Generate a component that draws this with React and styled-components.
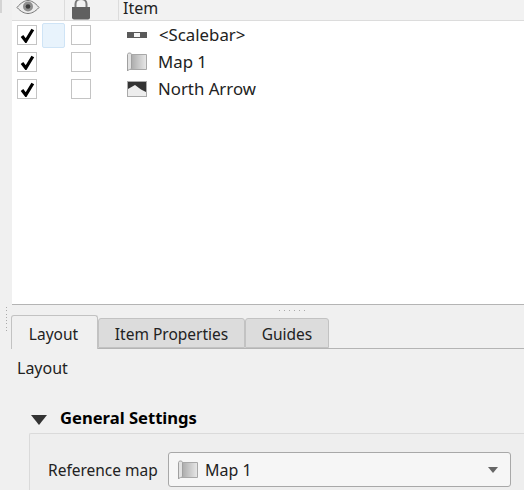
import React from "react";
import styled, { createGlobalStyle } from "styled-components";

const Global = createGlobalStyle`
  html, body {
    margin: 0;
    padding: 0;
    background: #f0f0f0;
    overflow: hidden;
  }
  * {
    box-sizing: border-box;
  }
`;

const Window = styled.div`
  width: 524px;
  height: 490px;
  overflow: hidden;
  position: relative;
  background: #f0f0f0;
  color: #222;
  font-family: "Noto Sans", "Liberation Sans", sans-serif;
  font-size: 15.5px;
  display: flex;
  flex-direction: column;
`;

const CornerMark = styled.div`
  position: absolute;
  left: 0;
  top: 0;
  width: 2px;
  height: 13px;
  background: #d4d4d4;
`;

const Grip = styled.div`
  position: absolute;
  left: 6px;
  top: 307px;
  height: 24px;
  display: flex;
  flex-direction: column;
  justify-content: space-between;
`;

const ItemsPanel = styled.div`
  height: 305px;
  margin-left: 12px;
  background: #fff;
  border-bottom: 1px solid #b4b4b4;
  display: flex;
  flex-direction: column;
  flex-shrink: 0;
`;

const Header = styled.div`
  height: 21px;
  background: #f2f2f2;
  border-bottom: 1px solid #dcdcdc;
  display: flex;
  flex-shrink: 0;
`;

const HeaderCell = styled.div`
  width: ${(p) => p.$w}px;
  flex: ${(p) => (p.$grow ? 1 : "none")};
  border-right: ${(p) => (p.$grow ? "none" : "1px solid #dcdcdc")};
  padding-left: ${(p) => p.$pad || 0}px;
  display: flex;
  align-items: flex-start;
  overflow: hidden;
  font-size: 16px;
  line-height: 16px;
`;

const Rows = styled.div`
  padding-top: 1px;
  display: flex;
  flex-direction: column;
  font-size: 16.8px;
`;

const Row = styled.div`
  height: 27px;
  padding-bottom: 1px;
  display: flex;
  align-items: center;
`;

const RowName = styled.span`
  margin-bottom: 2px;
`;

const Check = styled.div`
  width: 20px;
  height: 20px;
  margin-left: ${(p) => p.$left}px;
  background: #fff;
  border: 1px solid #c4c4c4;
  display: flex;
  align-items: center;
  justify-content: center;
  flex-shrink: 0;
`;

const Hover = styled.div`
  width: 23px;
  height: 25px;
  margin-left: 5px;
  background: #e8f3fc;
  border: 1px solid #cfe4f6;
  border-radius: 2px;
  flex-shrink: 0;
`;

const Spacer = styled.div`
  width: 23px;
  margin-left: 5px;
  flex-shrink: 0;
`;

const RowIcon = styled.div`
  width: 20px;
  height: 20px;
  margin-left: 36px;
  margin-right: ${(p) => p.$gap}px;
  display: flex;
  align-items: center;
  flex-shrink: 0;
`;

const Splitter = styled.div`
  height: 10px;
  display: flex;
  justify-content: flex-end;
  align-items: center;
  padding-right: 219px;
  gap: 4px;
  flex-shrink: 0;
`;

const Dot = styled.span`
  display: block;
  width: 1px;
  height: 1px;
  background: #aaa;
`;

const TabBar = styled.div`
  height: 34px;
  margin-left: 11px;
  display: flex;
  align-items: flex-end;
  border-bottom: 1px solid #b4b4b4;
  flex-shrink: 0;
`;

const Tab = styled.div`
  width: ${(p) => p.$w}px;
  height: ${(p) => (p.$active ? 34 : 30)}px;
  margin-bottom: ${(p) => (p.$active ? -1 : 0)}px;
  background: ${(p) => (p.$active ? "#f0f0f0" : "#dcdcdc")};
  border: 1px solid #c2c2c2;
  border-bottom: ${(p) => (p.$active ? "none" : "1px solid #c2c2c2")};
  border-radius: 3px 3px 0 0;
  display: flex;
  align-items: center;
  justify-content: center;
  padding-right: ${(p) => (p.$active ? 2 : 0)}px;
  padding-top: 2px;
`;

const PageTitle = styled.div`
  margin: 8px 0 0 17px;
  height: 22px;
  line-height: 22px;
  font-size: 16px;
`;

const SectionHead = styled.div`
  margin: 26px 0 0 31px;
  height: 24px;
  display: flex;
  align-items: center;
  gap: 13px;
  font-size: 16.6px;
  font-weight: 700;
  color: #000;
`;

const Triangle = styled.span`
  width: 0;
  height: 0;
  border-left: 8px solid transparent;
  border-right: 8px solid transparent;
  border-top: 10px solid #333;
  margin-top: 6px;
`;

const Group = styled.div`
  margin: 4px 0 0 29px;
  flex: 1;
  border: 1px solid #dadada;
  border-right: none;
  border-bottom: none;
  border-radius: 2px 0 0 0;
  background: #eeeeee;
  padding: 18px 13px 0 18px;
  display: flex;
  align-items: flex-start;
`;

const FieldLabel = styled.label`
  width: 120px;
  height: 34px;
  line-height: 36px;
  flex-shrink: 0;
`;

const Combo = styled.div`
  flex: 1;
  height: 35px;
  background: #f6f6f6;
  border: 1px solid #a8a8a8;
  border-radius: 3px;
  display: flex;
  align-items: center;
  padding: 0 12px 0 9px;
  gap: 7px;
  font-size: 16px;
`;

const Caret = styled.span`
  margin-left: auto;
  width: 0;
  height: 0;
  border-left: 5.5px solid transparent;
  border-right: 5.5px solid transparent;
  border-top: 6px solid #666;
`;

const EyeIcon = () => (
  <svg width="24" height="15" viewBox="0 1 24 15">
    <path d="M1 8.500C5 3.500 9 1.500 12 1.500s7 2 11 7c-4 4.500-8 6-11 6s-7-1.500-11-6z" fill="#ececec" stroke="#777" strokeWidth="1" />
    <circle cx="12" cy="7.500" r="5" fill="#8f8f8f" />
    <circle cx="12" cy="7.500" r="2.300" fill="#3a3a3a" />
  </svg>
);

const LockIcon = () => (
  <svg width="20" height="20" viewBox="0 0 20 20">
    <path d="M4.500 9V4C4.500 1 7 -1 10 -1s5.500 2 5.500 5v5" fill="none" stroke="#7a7a7a" strokeWidth="2" />
    <path d="M1 7h18v10.500a2 2 0 0 1-2 2H3a2 2 0 0 1-2-2z" fill="#606060" />
  </svg>
);

const CheckMark = () => (
  <svg width="15" height="15" viewBox="0 0 15 15">
    <path d="M2 8 5.800 13 12.800 1.500" fill="none" stroke="#000" strokeWidth="3.200" />
  </svg>
);

const ScalebarIcon = () => (
  <svg width="20" height="6" viewBox="0 0 20 6">
    <rect x="0" y="0" width="20" height="6" fill="#5a5a5a" />
    <rect x="7" y="1" width="6" height="4" fill="#f4f4f4" />
  </svg>
);

const MapIcon = ({ id }) => (
  <svg width="20" height="20" viewBox="0 0 20 20">
    <defs>
      <linearGradient id={id} x1="0" x2="1" y1="0" y2="0">
        <stop offset="0" stopColor="#a8a8a8" />
        <stop offset="1" stopColor="#e8e8e8" />
      </linearGradient>
    </defs>
    <path d="M3.500 2.500h16v15h-16z" fill={`url(#${id})`} stroke="#a8a8a8" />
    <path d="M0.500 2.500C0.500 0.500 4.500 0.500 4.500 2.500V16.500c0 1-4 1-4 2.500z" fill="#e2e2e2" stroke="#a0a0a0" />
  </svg>
);

const NorthIcon = () => (
  <svg width="20" height="16" viewBox="0 0 20 16">
    <rect x="0.500" y="0.500" width="19" height="15" fill="#ededed" stroke="#aaa" />
    <path d="M1 1h18v10l-5-2.500L8 4 1 8z" fill="#333" />
  </svg>
);

const App = () => {
  const layers = [
    { name: "<Scalebar>", icon: <ScalebarIcon />, gap: 12, hover: true },
    { name: "Map 1", icon: <MapIcon id="mapRow" />, gap: 11 },
    { name: "North Arrow", icon: <NorthIcon />, gap: 11 },
  ];
  return (
    <Window>
      <Global />
      <CornerMark />
      <Grip>
        {[0, 1, 2, 3, 4, 5, 6, 7].map((i) => (
          <Dot key={i} />
        ))}
      </Grip>
      <ItemsPanel>
        <Header>
          <HeaderCell $w={53} $pad={4}>
            <EyeIcon />
          </HeaderCell>
          <HeaderCell $w={54} $pad={6}>
            <LockIcon />
          </HeaderCell>
          <HeaderCell $grow $pad={4}>
            Item
          </HeaderCell>
        </Header>
        <Rows>
          {layers.map((l) => (
            <Row key={l.name}>
              <Check $left={5}>
                <CheckMark />
              </Check>
              {l.hover ? <Hover /> : <Spacer />}
              <Check $left={6} />
              <RowIcon $gap={l.gap}>{l.icon}</RowIcon>
              <RowName>{l.name}</RowName>
            </Row>
          ))}
        </Rows>
      </ItemsPanel>
      <Splitter>
        {[0, 1, 2, 3, 4, 5].map((i) => (
          <Dot key={i} />
        ))}
      </Splitter>
      <TabBar>
        <Tab $w={87} $active>
          Layout
        </Tab>
        <Tab $w={147}>Item Properties</Tab>
        <Tab $w={84}>Guides</Tab>
      </TabBar>
      <PageTitle>Layout</PageTitle>
      <SectionHead>
        <Triangle />
        General Settings
      </SectionHead>
      <Group>
        <FieldLabel>Reference map</FieldLabel>
        <Combo>
          <MapIcon id="mapCombo" />
          Map 1
          <Caret />
        </Combo>
      </Group>
    </Window>
  );
};

export default App;
